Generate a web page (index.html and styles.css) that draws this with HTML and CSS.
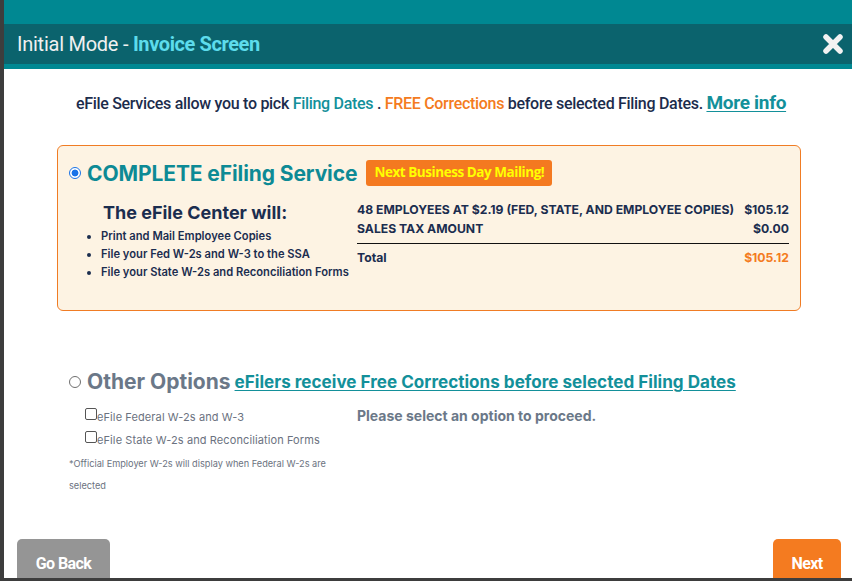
FILE: index.html
```html
<!DOCTYPE html>
<html>
<head>
<meta charset="utf-8">
<link rel="stylesheet" href="styles.css">
</head>
<body>
<div class="modal">
  <div class="topbar"></div>
  <div class="header">
    <div class="title">Initial Mode - <span class="title-accent">Invoice Screen</span></div>
    <svg class="close" width="22" height="22" viewBox="0 0 22 22"><path d="M4 4 L18 18 M18 4 L4 18" stroke="#f2f2f2" stroke-width="5.5" stroke-linecap="round"/></svg>
  </div>
  <div class="stripe"></div>
  <div class="content">
    <p class="intro">eFile Services allow you to pick <span class="teal">Filing Dates</span> . <span class="orange">FREE Corrections</span> before selected Filing Dates. <a class="more" href="#">More info</a></p>

    <div class="card">
      <div class="card-head">
        <span class="radio checked"></span>
        <span class="card-title">COMPLETE eFiling Service</span>
        <span class="badge">Next Business Day Mailing!</span>
      </div>
      <div class="card-body">
        <div class="will">
          <div class="will-title">The eFile Center will:</div>
          <ul class="will-list">
            <li>Print and Mail Employee Copies</li>
            <li>File your Fed W-2s and W-3 to the SSA</li>
            <li>File your State W-2s and Reconciliation Forms</li>
          </ul>
        </div>
        <div class="invoice">
          <div class="inv-row"><span>48 EMPLOYEES AT $2.19 (FED, STATE, AND EMPLOYEE COPIES)</span><span>$105.12</span></div>
          <div class="inv-row"><span>SALES TAX AMOUNT</span><span>$0.00</span></div>
          <div class="inv-row total"><span>Total</span><span class="orange">$105.12</span></div>
        </div>
      </div>
    </div>

    <div class="other">
      <div class="other-head">
        <span class="radio"></span>
        <span class="other-title">Other Options</span>
        <a class="other-link" href="#">eFilers receive Free Corrections before selected Filing Dates</a>
      </div>
      <div class="other-body">
        <div class="checks">
          <label class="check"><span class="box"></span>eFile Federal W-2s and W-3</label>
          <label class="check"><span class="box"></span>eFile State W-2s and Reconciliation Forms</label>
          <p class="note">*Official Employer W-2s will display when Federal W-2s are selected</p>
        </div>
        <div class="prompt">Please select an option to proceed.</div>
      </div>
    </div>
  </div>
  <div class="footer">
    <button class="btn back">Go Back</button>
    <button class="btn next">Next</button>
  </div>
</div>
</body>
</html>
```
FILE: styles.css
```css
html, body { margin: 0; padding: 0; }
body {
  background: #3d3d3d;
  width: 852px;
  height: 581px;
  overflow: hidden;
  font-family: Inter, "Noto Sans", sans-serif;
}
.modal {
  margin-left: 4px;
  width: 848px;
  height: 578px;
  background: #fff;
  display: flex;
  flex-direction: column;
  overflow: hidden;
}
.topbar { height: 24px; background: #008892; flex: none; }
.header {
  height: 40px;
  background: #0b636d;
  display: flex;
  align-items: center;
  justify-content: space-between;
  padding: 0 8px 0 13px;
  flex: none;
}
.title {
  font-family: Roboto, sans-serif;
  font-size: 20px;
  color: #f0f0f0;
  letter-spacing: -0.25px;
}
.title-accent { color: #5ddcec; font-weight: 700; letter-spacing: -0.4px; }
.close { display: block; }
.stripe { height: 5px; background: #008892; flex: none; }
.content { flex: 1; padding: 0 51px 0 53px; }
.intro {
  margin: 22px 0 0;
  text-align: center;
  font-family: Roboto, sans-serif;
  font-weight: 500;
  font-size: 16px;
  letter-spacing: -0.3px;
  color: #1c2c4c;
  padding-left: 4px;
}
.teal { color: #13909a; }
.orange { color: #f47b20; }
.more {
  color: #13909a;
  font-size: 19px;
  font-weight: 700;
  text-decoration: underline;
  text-underline-offset: 2px;
}
.card {
  margin-top: 31px;
  background: #fdf3e3;
  border: 1px solid #f07c24;
  border-radius: 6px;
  height: 166px;
  padding: 14px 11px 0 11px;
  box-sizing: border-box;
}
.card-head { display: flex; align-items: center; }
.radio {
  width: 12px;
  height: 12px;
  border-radius: 50%;
  border: 1px solid #6f6f6f;
  box-sizing: border-box;
  background: #fff;
  flex: none;
  margin-right: 6px;
}
.radio.checked {
  border: 1.5px solid #1a73e8;
  background: radial-gradient(circle, #1a73e8 0 3.2px, #fff 3.7px);
}
.card-title {
  font-size: 21px;
  font-weight: 700;
  color: #0d8a95;
  letter-spacing: -0.1px;
}
.badge {
  margin-left: 9px;
  background: #f47920;
  color: #ffff00;
  font-family: "Open Sans", sans-serif;
  font-weight: 700;
  font-size: 13.5px;
  letter-spacing: -0.45px;
  padding: 3px 8px 5px;
  border-radius: 3px;
}
.card-body { display: flex; margin-top: 11px; }
.will { width: 288px; flex: none; }
.will-title {
  margin-left: 34px;
  font-size: 18px;
  font-weight: 700;
  color: #1b2d4f;
  margin-top: 5px;
}
.will-list {
  margin: 4px 0 0;
  padding-left: 32px;
  font-size: 11.2px;
  font-weight: 600;
  color: #1b2d4f;
  line-height: 18px;
}
.invoice { width: 432px; color: #1b2d4f; font-size: 12.2px; font-weight: 700; margin-top: 3px; }
.inv-row { display: flex; justify-content: space-between; line-height: 19px; }
.inv-row.total { border-top: 1.5px solid #111; margin-top: 5px; padding-top: 4px; }
.other { margin-top: 58px; padding-left: 12px; }
.other-head { display: flex; align-items: center; }
.other-title { font-size: 21px; font-weight: 700; color: #6b7888; margin-right: 4px; }
.other-link {
  color: #13909a;
  font-size: 17.1px;
  font-weight: 700;
  text-decoration: underline;
  text-underline-offset: 2px;
}
.other-body { display: flex; margin-top: 11px; }
.checks { width: 288px; flex: none; }
.check {
  display: flex;
  align-items: center;
  margin-left: 16px;
  font-size: 11px;
  color: #6b7280;
  height: 23px;
  letter-spacing: 0.1px;
}
.box {
  width: 12px;
  height: 12px;
  border: 1px solid #555;
  border-radius: 2px;
  box-sizing: border-box;
  margin-bottom: 5px;
}
.note {
  margin: 2px 0 0;
  font-size: 9.2px;
  color: #6b7280;
  line-height: 22px;
  width: 275px;
}
.prompt { font-size: 14px; font-weight: 700; color: #6b7888; margin-top: 2px; }
.footer {
  display: flex;
  justify-content: space-between;
  padding: 0 11px 0 13px;
  height: 39px;
  flex: none;
}
.btn {
  border: none;
  border-radius: 5px 5px 0 0;
  color: #fff;
  font-family: Roboto, sans-serif;
  font-weight: 700;
  font-size: 16px;
  letter-spacing: -0.6px;
  padding: 6px 0 0;
  height: 42px;
}
.back { background: #959595; width: 93px; }
.next { background: #f47b20; width: 68px; }
```
